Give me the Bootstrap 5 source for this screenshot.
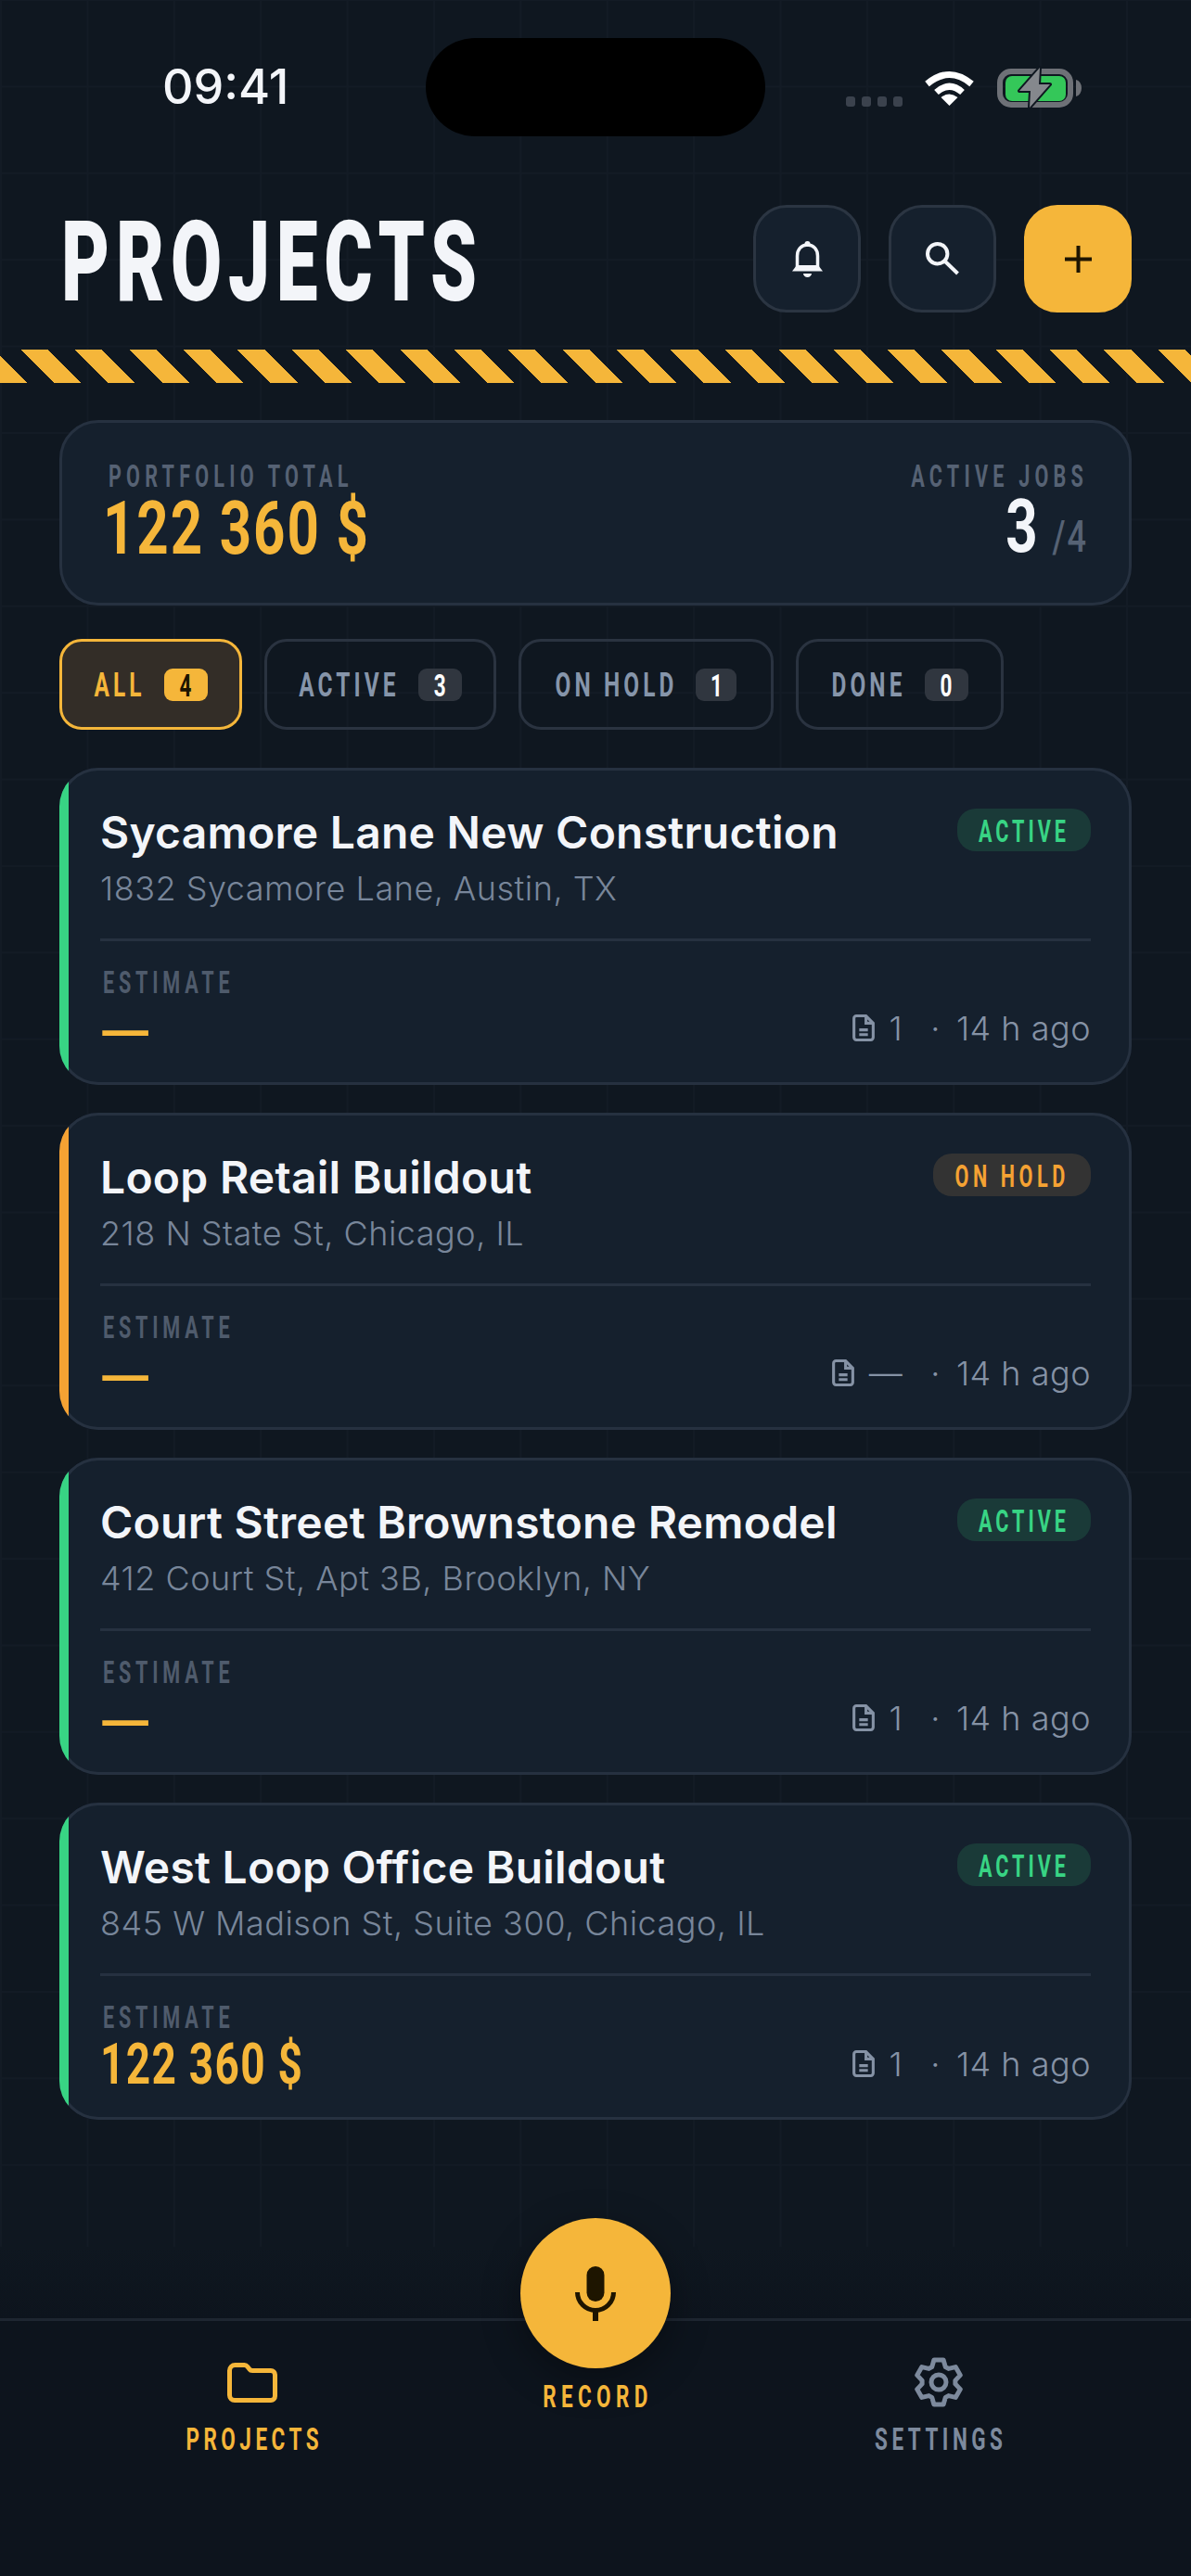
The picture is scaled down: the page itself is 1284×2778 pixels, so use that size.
<!DOCTYPE html>
<html lang="en"><head><meta charset="utf-8"><title>Projects</title>
<link rel="stylesheet" href="https://cdn.jsdelivr.net/npm/bootstrap@5.3.0/dist/css/bootstrap.min.css">
<style>
html,body{background:#0f1720;margin:0}
body{font-family:"Inter","Liberation Sans",sans-serif;color:#f3f5f9;overflow:hidden}
.screen{width:1284px;height:2778px;overflow:hidden;background:#0f1720}
.gridarea{height:2423px;background-color:#0f1720;background-image:linear-gradient(#131b25 2px,transparent 2px),linear-gradient(90deg,#131b25 2px,transparent 2px);background-size:93.4px 93.4px;background-position:0 -1px}
.osw{font-family:"Roboto","Liberation Sans",sans-serif;font-weight:700;transform:scaleY(1.5);display:inline-block}
.osw.num{transform:scaleY(1.34)}
.statusrow{padding-top:41px;height:147px}
.clock{margin-left:175px;width:284px;font-size:52px;font-weight:500;line-height:60px}
.island{width:366px;height:106px;border-radius:53px;background:#000}
.sysicons{margin-left:87px}
.sigdots{display:flex;gap:7px;margin-top:30px;margin-right:23px}
.sigdots i{width:10px;height:11px;border-radius:3px;background:#3b424d;display:block}
.headrow{margin-top:74px;padding:0 64px 0 66px}
.pagetitle{font-size:80px;font-weight:900;letter-spacing:6.8px;line-height:60px;color:#f3f5f9;margin:32px 0 0}
.btnset{gap:30px}
.iconbtn{width:116px;height:116px;border-radius:36px;background:#15202d;border:3px solid #2b3542;padding:0}
.iconbtn.addbtn{background:#f5b63a;border-color:#f5b63a}
.hazard{margin-top:40px;height:36px;background:repeating-linear-gradient(45deg,#f5b63a 0 20.64px,transparent 20.64px 41.28px)}
.mainpane{padding:40px 64px 0}
.summary{height:200px;border:3px solid #263140;border-radius:42px;background:#15202d;padding:49px 44px 0 50px}
.sumlabel{font-size:21.6px;letter-spacing:5.2px;line-height:18px;color:#566274}
.sumvalue{font-size:60px;line-height:44px;margin:25px 0 0 -6px;letter-spacing:1.9px;color:#f5b63a}
.sumcount{color:#f3f5f9}
.sumof{font-size:36px;color:#566274;letter-spacing:2px;margin-left:14px;font-weight:500}
.tabs{margin-top:36px;gap:24px}
.tabbtn{height:98px;border:3px solid #2a3340;border-radius:24px;background:transparent;color:#8695aa;padding:0;justify-content:center;gap:20px}
.tabbtn.on{border-color:#f5b63a;background:#332d27;color:#f5b63a}
.tabbtn.w1{width:197px}.tabbtn.w2{width:250px}.tabbtn.w3{width:275px}.tabbtn.w4{width:224px}
.tablabel{font-size:24.4px;letter-spacing:4.1px;line-height:22px;margin-top:2px}
.tabcount{width:47px;height:35px;border-radius:9px;background:#30363f;color:#fff;display:flex;align-items:center;justify-content:center}
.tabcount.slim{width:44px}
.on .tabcount{background:#f5b63a;color:#1c1400}
.tabcount span{font-size:22.5px;line-height:18px;margin-top:2px}
.cards{margin-top:41px;gap:30px}
.jobcard{position:relative;overflow:hidden;height:342px;border-radius:42px;background:#15202d;box-shadow:inset 0 0 0 3px #263140;padding:40px 44px 0}
.jobcard::before{content:"";position:absolute;left:0;top:0;bottom:0;width:9.5px;background:#38d484}
.jobcard.hold::before{background:#f5a233}
.jobtitle{font-size:48px;font-weight:600;line-height:60px;letter-spacing:.25px;color:#f3f5f9;margin:0}
.jobaddr{font-size:36px;font-weight:300;line-height:50px;margin-top:5px;color:#78869a;letter-spacing:.5px}
.pill{height:46px;border-radius:20px;background:#1a3a38;color:#38d484;padding:0 23px;margin-top:4px;display:flex;align-items:center}
.pill span{font-size:21.6px;letter-spacing:4px;line-height:16px;margin-top:3px}
.hold .pill{background:#333333;color:#f5a233}
.hold .pill span{letter-spacing:4.6px}
.cardrule{height:3px;background:#263140;margin-top:28.5px}
.estlabel{font-size:21.6px;letter-spacing:4.8px;line-height:18px;color:#4f5b6c;margin:36.5px 0 0 3px;display:block}
.estvalue{font-size:46px;line-height:44px;color:#f5b63a;margin-top:18.5px;letter-spacing:1.3px;display:block}
.estdash{font-size:76px;font-weight:400;line-height:44px;color:#f5b63a;margin:17.5px 0 0 -3px;display:block;transform:translateY(6px);font-family:"Roboto","Liberation Sans",sans-serif}
.metarow{height:40px;color:#8592a5;font-size:36px;font-weight:300;line-height:40px;letter-spacing:.5px;margin-bottom:2px}
.metacount{margin-left:16px}
.metadot{margin:0 17px 0 30px}
.bottomfade{height:77px;background:linear-gradient(#0f1720,#0d141d)}
.tabbar{height:278px;background:#0d141d;border-top:3px solid #1e2631;display:grid;grid-template-columns:544px 196px 544px}
.barcell{display:flex;flex-direction:column;align-items:center;padding-top:39px;color:#7d8a9d}
.barcell.amber{color:#f5b63a}
.barcell.midcell{padding-top:0}
.foldericon{margin:5.5px 0}
.barlabel{font-size:22.5px;letter-spacing:4.5px;line-height:18px;margin-top:25px;padding-left:4.5px}
.recbtn{width:162px;height:162px;border-radius:50%;background:#f5b63a;border:0;margin-top:-111px;box-shadow:0 12px 40px rgba(0,0,0,.35);flex:none;padding:0}
.reclabel{font-size:22.5px;letter-spacing:5.4px;line-height:18px;color:#f5b63a;margin-top:21px;padding-left:5px}
</style></head>
<body>
<div class="screen">
<div class="gridarea">
  <div class="statusrow d-flex">
    <div class="clock align-self-center">09:41</div>
    <div class="island"></div>
    <div class="sysicons d-flex align-items-center">
      <div class="sigdots"><i></i><i></i><i></i><i></i></div>
      <svg width="55" height="40" viewBox="0 0 55 40" class="me-4" aria-hidden="true"><path d="M3.5 16.5Q27.5-3.5 51.5 16.5" fill="none" stroke="#fff" stroke-width="7"/><path d="M13.5 25.5Q27.5 13 41.5 25.5" fill="none" stroke="#fff" stroke-width="7"/><path d="M27.5 40 18.5 31Q27.5 24 36.5 31Z" fill="#fff"/></svg>
      <svg width="92" height="47" viewBox="0 0 92 47" aria-hidden="true"><rect x="3" y="6" width="76" height="36" rx="12" fill="none" stroke="#6e7177" stroke-width="6"/><rect x="9" y="11" width="65" height="27" rx="7" fill="#34c759"/><path d="M85 15a7 9 0 0 1 6 9 7 9 0 0 1-6 9z" fill="#6e7177"/><path d="M46 2 24 27H36L35 45 57 20H45Z" fill="#85888d" stroke="#0f1720" stroke-width="4" paint-order="stroke" stroke-linejoin="round"/></svg>
    </div>
  </div>
  <div class="headrow d-flex justify-content-between align-items-start">
    <h1 class="osw pagetitle">PROJECTS</h1>
    <div class="btnset d-flex">
      <button class="btn iconbtn d-flex align-items-center justify-content-center" aria-label="Notifications"><svg width="33" height="39" viewBox="0 0 33 39" aria-hidden="true"><circle cx="16.5" cy="3" r="3" fill="#f3f5f9"/><path d="M5.5 30V16C5.5 9 10 4 16.5 4S27.5 9 27.5 16V30" fill="none" stroke="#f3f5f9" stroke-width="3.5"/><path d="M5 26 0 32.5H33L28 26Z" fill="#f3f5f9"/><path d="M12 35H21A4.5 4 0 0 1 12 35Z" fill="#f3f5f9"/></svg></button>
      <button class="btn iconbtn d-flex align-items-center justify-content-center" aria-label="Search"><svg width="36" height="36" viewBox="0 0 36 36" aria-hidden="true"><circle cx="12.7" cy="12.7" r="10.7" fill="none" stroke="#f3f5f9" stroke-width="4"/><path d="M20.5 20.5 34.5 34" fill="none" stroke="#f3f5f9" stroke-width="4"/></svg></button>
      <button class="btn iconbtn addbtn d-flex align-items-center justify-content-center" aria-label="Add"><svg width="29" height="29" viewBox="0 0 29 29" aria-hidden="true"><path d="M14.5 0V29M0 14.5H29" fill="none" stroke="#1e1500" stroke-width="4"/></svg></button>
    </div>
  </div>
  <div class="hazard"></div>
  <main class="mainpane">
    <section class="summary d-flex justify-content-between">
      <div>
        <div class="osw sumlabel d-block">PORTFOLIO TOTAL</div>
        <div class="osw num sumvalue d-block">122 360 $</div>
      </div>
      <div class="text-end">
        <div class="osw sumlabel d-block">ACTIVE JOBS</div>
        <div class="osw num sumvalue sumcount d-block">3<span class="sumof">/4</span></div>
      </div>
    </section>
    <div class="tabs d-flex">
      <button class="btn tabbtn w1 on d-flex align-items-center"><span class="osw tablabel">ALL</span><span class="tabcount"><span class="osw">4</span></span></button>
      <button class="btn tabbtn w2 d-flex align-items-center"><span class="osw tablabel">ACTIVE</span><span class="tabcount"><span class="osw">3</span></span></button>
      <button class="btn tabbtn w3 d-flex align-items-center"><span class="osw tablabel">ON HOLD</span><span class="tabcount slim"><span class="osw">1</span></span></button>
      <button class="btn tabbtn w4 d-flex align-items-center"><span class="osw tablabel">DONE</span><span class="tabcount"><span class="osw">0</span></span></button>
    </div>
    <div class="cards d-flex flex-column">
      <article class="jobcard">
        <div class="d-flex justify-content-between align-items-start"><h2 class="jobtitle">Sycamore Lane New Construction</h2><div class="pill"><span class="osw">ACTIVE</span></div></div>
        <div class="jobaddr">1832 Sycamore Lane, Austin, TX</div>
        <div class="cardrule"></div>
        <div class="d-flex justify-content-between">
          <div><span class="osw estlabel">ESTIMATE</span><span class="estdash">—</span></div>
          <div class="metarow d-flex align-items-center align-self-end"><svg width="24" height="29" viewBox="0 0 23 28" aria-hidden="true"><path d="M4 1.5H14L21.5 9V24A2.5 2.5 0 0 1 19 26.5H4A2.5 2.5 0 0 1 1.5 24V4A2.5 2.5 0 0 1 4 1.5ZM14 1.5V9H21.5M7 16H16M7 21H16" fill="none" stroke="#8592a5" stroke-width="3"/></svg><span class="metacount">1</span><span class="metadot">·</span><span>14 h ago</span></div>
        </div>
      </article>
      <article class="jobcard hold">
        <div class="d-flex justify-content-between align-items-start"><h2 class="jobtitle">Loop Retail Buildout</h2><div class="pill"><span class="osw">ON HOLD</span></div></div>
        <div class="jobaddr">218 N State St, Chicago, IL</div>
        <div class="cardrule"></div>
        <div class="d-flex justify-content-between">
          <div><span class="osw estlabel">ESTIMATE</span><span class="estdash">—</span></div>
          <div class="metarow d-flex align-items-center align-self-end"><svg width="24" height="29" viewBox="0 0 23 28" aria-hidden="true"><path d="M4 1.5H14L21.5 9V24A2.5 2.5 0 0 1 19 26.5H4A2.5 2.5 0 0 1 1.5 24V4A2.5 2.5 0 0 1 4 1.5ZM14 1.5V9H21.5M7 16H16M7 21H16" fill="none" stroke="#8592a5" stroke-width="3"/></svg><span class="metacount">—</span><span class="metadot">·</span><span>14 h ago</span></div>
        </div>
      </article>
      <article class="jobcard">
        <div class="d-flex justify-content-between align-items-start"><h2 class="jobtitle">Court Street Brownstone Remodel</h2><div class="pill"><span class="osw">ACTIVE</span></div></div>
        <div class="jobaddr">412 Court St, Apt 3B, Brooklyn, NY</div>
        <div class="cardrule"></div>
        <div class="d-flex justify-content-between">
          <div><span class="osw estlabel">ESTIMATE</span><span class="estdash">—</span></div>
          <div class="metarow d-flex align-items-center align-self-end"><svg width="24" height="29" viewBox="0 0 23 28" aria-hidden="true"><path d="M4 1.5H14L21.5 9V24A2.5 2.5 0 0 1 19 26.5H4A2.5 2.5 0 0 1 1.5 24V4A2.5 2.5 0 0 1 4 1.5ZM14 1.5V9H21.5M7 16H16M7 21H16" fill="none" stroke="#8592a5" stroke-width="3"/></svg><span class="metacount">1</span><span class="metadot">·</span><span>14 h ago</span></div>
        </div>
      </article>
      <article class="jobcard">
        <div class="d-flex justify-content-between align-items-start"><h2 class="jobtitle">West Loop Office Buildout</h2><div class="pill"><span class="osw">ACTIVE</span></div></div>
        <div class="jobaddr">845 W Madison St, Suite 300, Chicago, IL</div>
        <div class="cardrule"></div>
        <div class="d-flex justify-content-between">
          <div><span class="osw estlabel">ESTIMATE</span><span class="osw num estvalue">122 360 $</span></div>
          <div class="metarow d-flex align-items-center align-self-end"><svg width="24" height="29" viewBox="0 0 23 28" aria-hidden="true"><path d="M4 1.5H14L21.5 9V24A2.5 2.5 0 0 1 19 26.5H4A2.5 2.5 0 0 1 1.5 24V4A2.5 2.5 0 0 1 4 1.5ZM14 1.5V9H21.5M7 16H16M7 21H16" fill="none" stroke="#8592a5" stroke-width="3"/></svg><span class="metacount">1</span><span class="metadot">·</span><span>14 h ago</span></div>
        </div>
      </article>
    </div>
  </main>
</div>
<div class="bottomfade"></div>
<nav class="tabbar">
  <div class="barcell amber"><svg class="foldericon" width="54" height="43" viewBox="0 0 54 43" aria-hidden="true"><path d="M2.5 8.5A6 6 0 0 1 8.5 2.5H18.5Q20.5 2.5 21.8 4.2L24 7Q25 8.5 27 8.5H47A4.5 4.5 0 0 1 51.5 13V36A4.5 4.5 0 0 1 47 40.5H8A5.5 5.5 0 0 1 2.5 35Z" fill="none" stroke="#f5b63a" stroke-width="5" stroke-linejoin="round"/></svg><span class="osw barlabel">PROJECTS</span></div>
  <div class="barcell midcell"><button class="btn recbtn d-flex align-items-center justify-content-center" aria-label="Record"><svg width="44" height="59" viewBox="0 0 44 59" aria-hidden="true"><rect x="12.5" width="19" height="38" rx="9.5" fill="#1e1500"/><path d="M2.5 28A19.5 19.5 0 0 0 41.5 28" fill="none" stroke="#1e1500" stroke-width="5"/><path d="M22 47V59" stroke="#1e1500" stroke-width="6"/></svg></button><span class="osw reclabel">RECORD</span></div>
  <div class="barcell"><svg width="54" height="54" viewBox="0 0 54 54" aria-hidden="true"><path d="M19.7 10.6 21.9 3H32.1L34.3 10.6 37.6 12.4 45.2 10.6 50.3 19.4 44.9 25.1V28.9L50.3 34.6 45.2 43.4 37.6 41.6 34.3 43.4 32.1 51H21.9L19.7 43.4 16.4 41.6 8.8 43.4 3.7 34.6 9.1 28.9V25.1L3.7 19.4 8.8 10.6 16.4 12.4Z" fill="none" stroke="#7d8a9d" stroke-width="5" stroke-linejoin="round"/><circle cx="27" cy="27" r="8" fill="none" stroke="#7d8a9d" stroke-width="5"/></svg><span class="osw barlabel">SETTINGS</span></div>
</nav>
</div>
<script src="https://cdn.jsdelivr.net/npm/bootstrap@5.3.0/dist/js/bootstrap.bundle.min.js"></script>
</body></html>
